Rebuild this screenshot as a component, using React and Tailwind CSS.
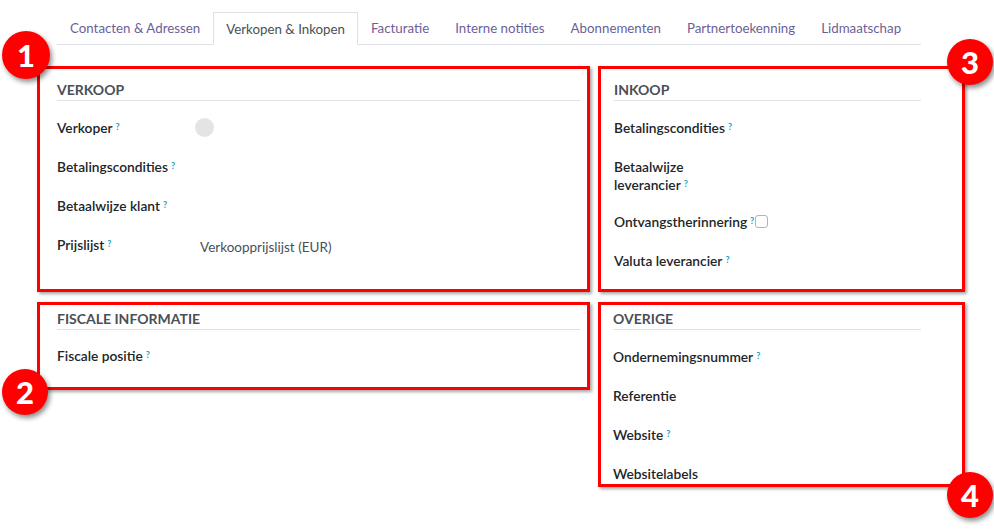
import React from 'react';

const tabs = [
  'Contacten & Adressen',
  'Verkopen & Inkopen',
  'Facturatie',
  'Interne notities',
  'Abonnementen',
  'Partnertoekenning',
  'Lidmaatschap',
];

function Help() {
  return <sup className="ml-[3px] text-[9px] font-bold text-[#17a2b8] relative top-[-3px]">?</sup>;
}

function Label({ children, help = true, className = '' }) {
  return (
    <div className={`text-[13.75px] leading-[18px] font-semibold text-[#212529] ${className}`}>
      {children}
      {help && <Help />}
    </div>
  );
}

function Heading({ children }) {
  return (
    <div className="border-b border-[#e2e2e2] pb-[1px] text-[14px] leading-[18px] font-bold uppercase text-[#4b4f56]">
      {children}
    </div>
  );
}

function RedBox({ className = '', children }) {
  return (
    <div className={`border-[3px] border-[#ff0000] shadow-[2px_2px_3px_rgba(0,0,0,0.35)] ${className}`}>
      {children}
    </div>
  );
}

function Badge({ n, className }) {
  return (
    <div
      className={`absolute flex h-[46px] w-[46px] items-center justify-center rounded-full bg-[#ff0000] text-[31px] font-black text-white shadow-[2px_3px_5px_rgba(0,0,0,0.45)] ${className}`}
    >
      {n}
    </div>
  );
}

export default function App() {
  return (
    <div className="relative h-[531px] w-[994px] overflow-hidden bg-white font-['Lato','Liberation_Sans',sans-serif]">
      {/* TABS */}
      <div className="ml-[57px] mt-[12px] flex w-[864px] border-b border-[#dee2e6]">
        {tabs.map((t, i) =>
          i === 1 ? (
            <div
              key={t}
              className="mb-[-1px] flex h-[33px] items-center border border-b-white border-[#dee2e6] bg-white px-[12px] pt-[2px] text-[13.3px] text-[#495057]"
            >
              {t}
            </div>
          ) : (
            <div key={t} className="flex h-[32px] items-center px-[13px] pt-[2px] text-[13.3px] text-[#6c5f98]">
              {t}
            </div>
          )
        )}
      </div>

      {/* FORM */}
      <div className="ml-[37px] mt-[21px] flex gap-[8px]">
        <div className="flex w-[553px] flex-col gap-[10px]">
          <RedBox className="h-[226px] pl-[17px] pr-[7px] pt-[12px]">
            <Heading>Verkoop</Heading>
            <div className="mt-[18px] flex flex-col">
              <div className="flex h-[39px] items-start">
                <Label className="w-[138px]">Verkoper</Label>
                <div className="mt-[-1px] h-[19px] w-[19px] rounded-full bg-[#e4e4e4]" />
              </div>
              <div className="flex h-[39px] items-start">
                <Label>Betalingscondities</Label>
              </div>
              <div className="flex h-[39px] items-start">
                <Label>Betaalwijze klant</Label>
              </div>
              <div className="flex h-[39px] items-start">
                <Label className="w-[143px]">Prijslijst</Label>
                <div className="pt-[2px] text-[13.5px] leading-[18px] text-[#495057]">Verkoopprijslijst (EUR)</div>
              </div>
            </div>
          </RedBox>
          <RedBox className="h-[88px] pl-[17px] pr-[7px] pt-[5px]">
            <Heading>Fiscale informatie</Heading>
            <div className="mt-[17px]">
              <Label>Fiscale positie</Label>
            </div>
          </RedBox>
        </div>

        <div className="flex w-[367px] flex-col gap-[10px]">
          <RedBox className="h-[226px] pl-[13px] pr-[41px] pt-[12px]">
            <Heading>Inkoop</Heading>
            <div className="mt-[18px] flex flex-col">
              <div className="h-[39px]">
                <Label>Betalingscondities</Label>
              </div>
              <div className="h-[55px]">
                <Label help={false}>Betaalwijze</Label>
                <Label>leverancier</Label>
              </div>
              <div className="flex h-[39px] items-start">
                <Label>Ontvangstherinnering</Label>
                <div className="ml-[1px] mt-[2px] h-[13px] w-[13px] rounded-[3px] border border-[#adb5bd] bg-white" />
              </div>
              <div className="h-[39px]">
                <Label>Valuta leverancier</Label>
              </div>
            </div>
          </RedBox>
          <RedBox className="h-[185px] pl-[12px] pr-[41px] pt-[5px]">
            <Heading>Overige</Heading>
            <div className="mt-[18px] flex flex-col">
              <div className="h-[39px]">
                <Label>Ondernemingsnummer</Label>
              </div>
              <div className="h-[39px]">
                <Label help={false}>Referentie</Label>
              </div>
              <div className="h-[39px]">
                <Label>Website</Label>
              </div>
              <div className="h-[39px]">
                <Label help={false}>Websitelabels</Label>
              </div>
            </div>
          </RedBox>
        </div>
      </div>

      <Badge n="1" className="left-[2px] top-[31px] h-[48px] w-[48px]" />
      <Badge n="3" className="left-[947px] top-[39px]" />
      <Badge n="2" className="left-[2px] top-[369px]" />
      <Badge n="4" className="left-[947px] top-[472px]" />
    </div>
  );
}
